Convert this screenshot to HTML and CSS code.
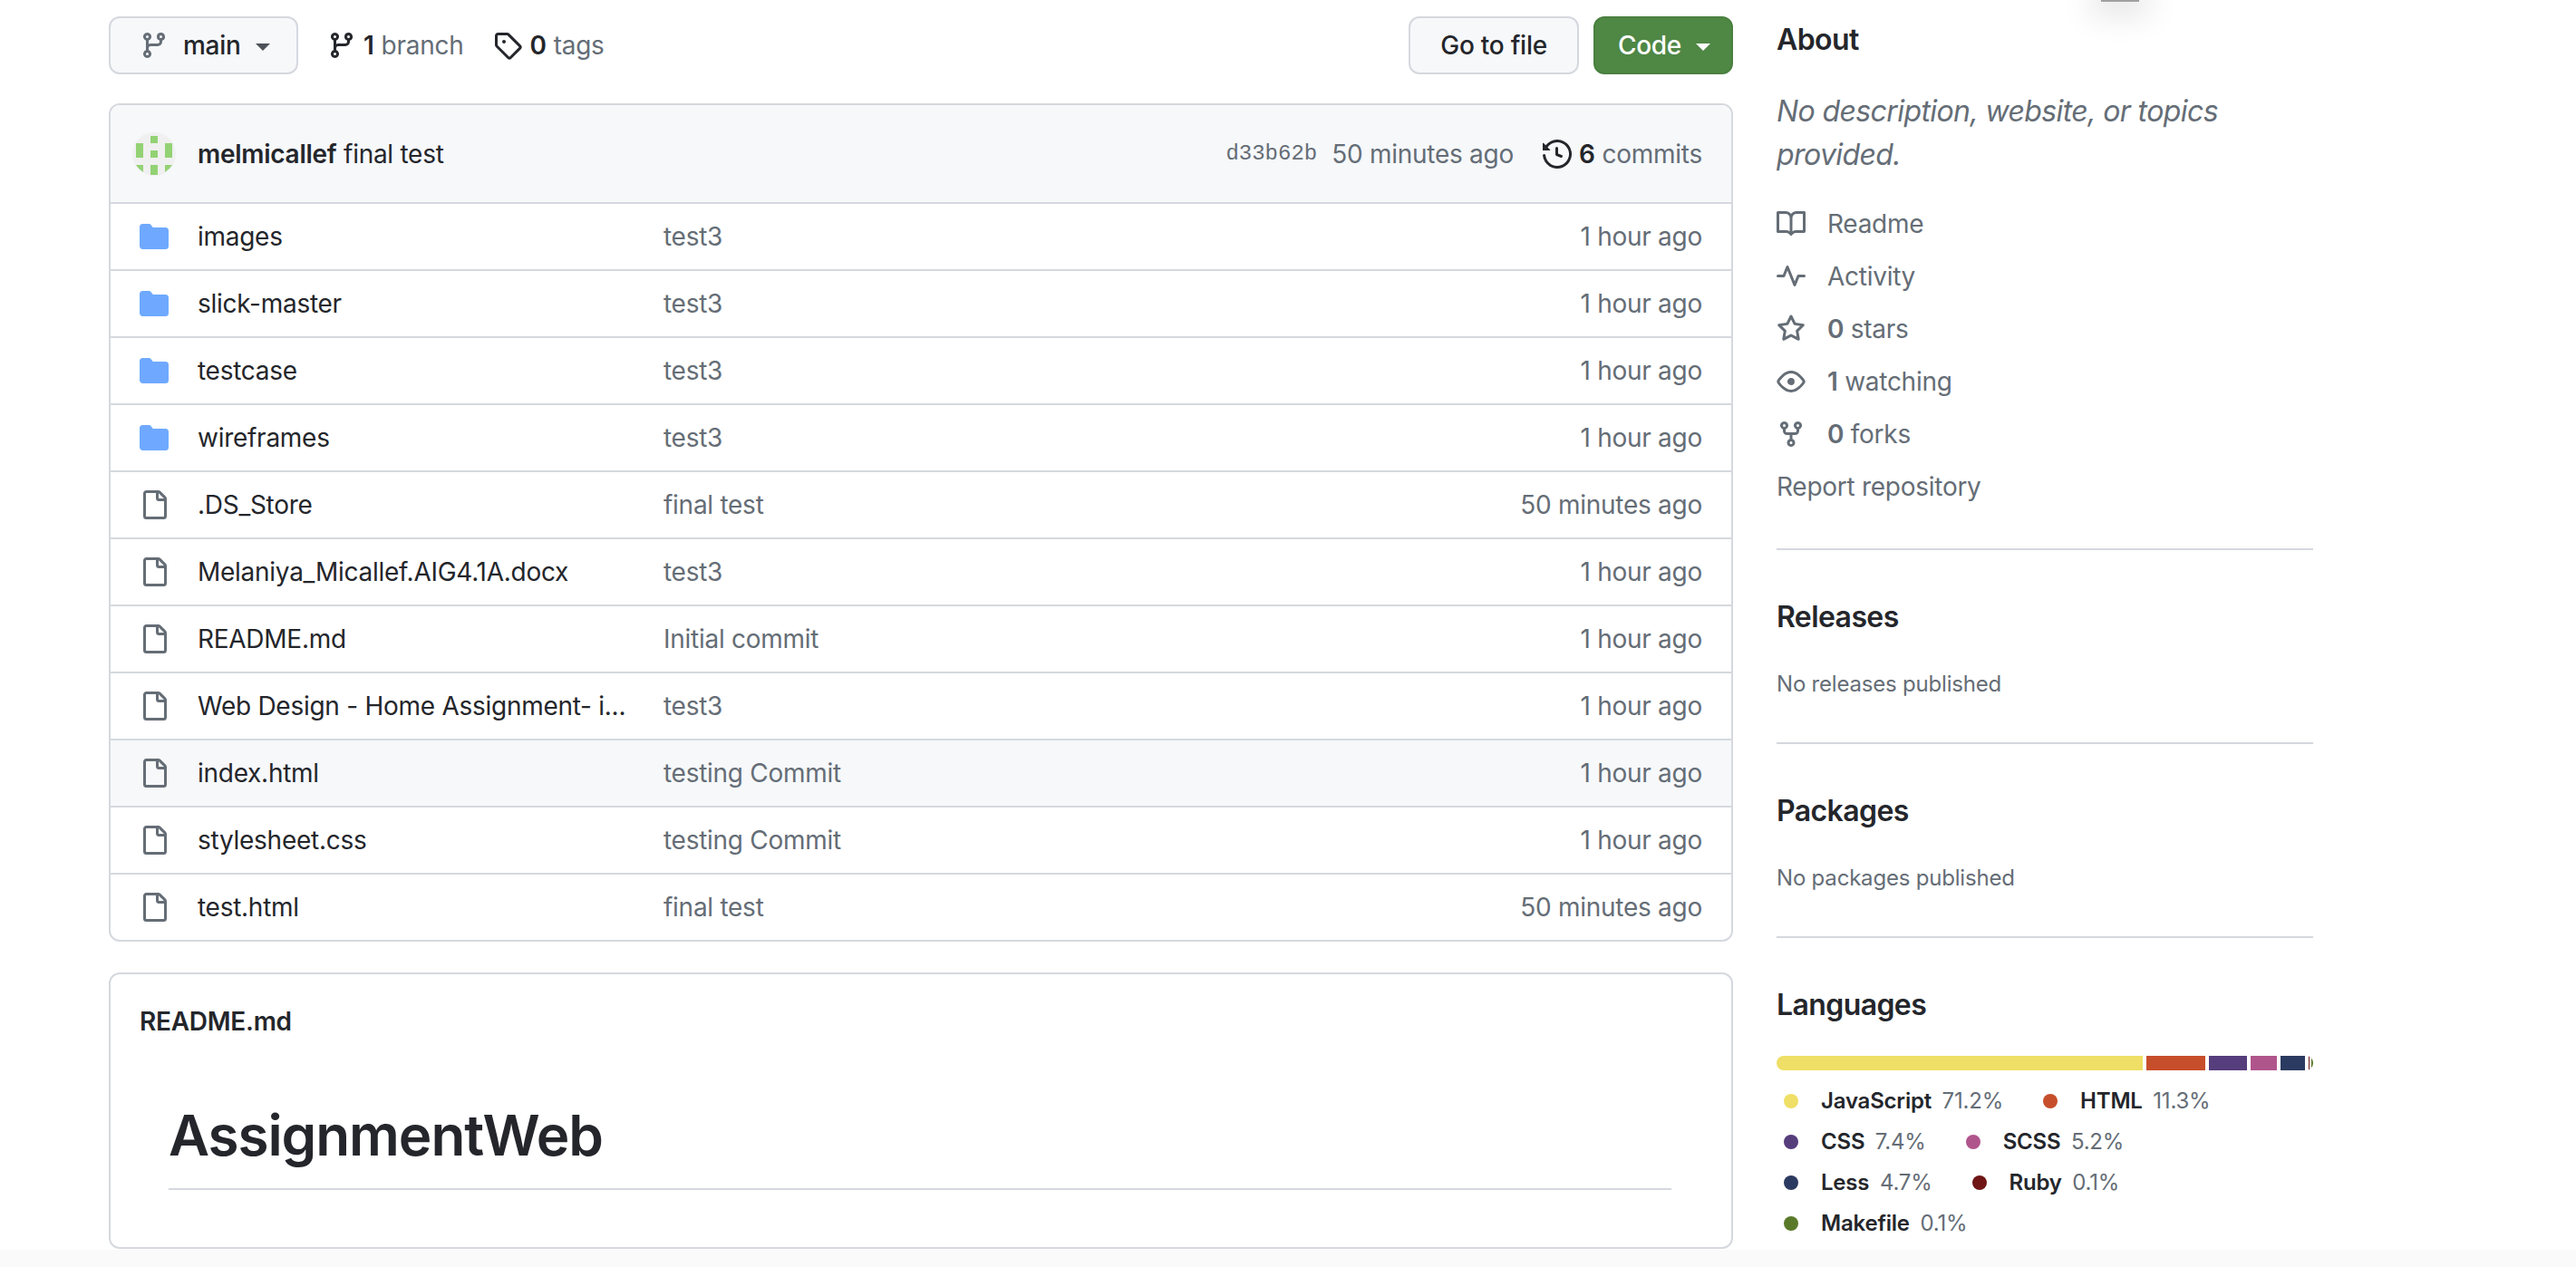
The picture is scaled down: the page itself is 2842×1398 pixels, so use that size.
FILE: index.html
```html
<!DOCTYPE html>
<html lang="en">

<head>
    <meta charset="UTF-8">
    <meta name="viewport" content="width=device-width, initial-scale=1.0">
    <title>AssignmentWeb</title>
    <link rel="stylesheet" href="styles.css">
</head>

<body>
    <svg class="sprites" aria-hidden="true">
        <symbol id="i-branch" viewBox="0 0 16 16"><path d="M9.5 3.25a2.25 2.25 0 1 1 3 2.122V6A2.5 2.5 0 0 1 10 8.5H6a1 1 0 0 0-1 1v1.128a2.251 2.251 0 1 1-1.5 0V5.372a2.25 2.25 0 1 1 1.5 0v1.836A2.493 2.493 0 0 1 6 7h4a1 1 0 0 0 1-1v-.628A2.25 2.25 0 0 1 9.5 3.25Zm-6 0a.75.75 0 1 0 1.5 0 .75.75 0 0 0-1.5 0Zm8.25-.75a.75.75 0 1 0 0 1.5.75.75 0 0 0 0-1.5ZM4.25 12a.75.75 0 1 0 0 1.5.75.75 0 0 0 0-1.5Z"/></symbol>
        <symbol id="i-tag" viewBox="0 0 16 16"><path d="M1 7.775V2.75C1 1.784 1.784 1 2.75 1h5.025c.464 0 .91.184 1.238.513l6.25 6.25a1.75 1.75 0 0 1 0 2.474l-5.026 5.026a1.75 1.75 0 0 1-2.474 0l-6.25-6.25A1.75 1.75 0 0 1 1 7.775Zm1.5 0c0 .066.026.13.073.177l6.25 6.25a.25.25 0 0 0 .354 0l5.025-5.025a.25.25 0 0 0 0-.354l-6.25-6.25a.25.25 0 0 0-.177-.073H2.75a.25.25 0 0 0-.25.25ZM6 5a1 1 0 1 1 0 2 1 1 0 0 1 0-2Z"/></symbol>
        <symbol id="i-history" viewBox="0 0 16 16"><path d="m.427 1.927 1.215 1.215a8.002 8.002 0 1 1-1.6 5.685.75.75 0 1 1 1.493-.154 6.5 6.5 0 1 0 1.18-4.458l1.358 1.358A.25.25 0 0 1 3.896 6H.25A.25.25 0 0 1 0 5.75V2.104a.25.25 0 0 1 .427-.177ZM7.75 4a.75.75 0 0 1 .75.75v2.992l2.028.812a.75.75 0 0 1-.557 1.392l-2.5-1A.751.751 0 0 1 7 8.25v-3.5A.75.75 0 0 1 7.75 4Z"/></symbol>
        <symbol id="i-folder" viewBox="0 0 16 16"><path d="M1.75 1A1.75 1.75 0 0 0 0 2.75v10.5C0 14.216.784 15 1.75 15h12.5A1.75 1.75 0 0 0 16 13.25v-8.5A1.75 1.75 0 0 0 14.25 3H7.5a.25.25 0 0 1-.2-.1l-.9-1.2C6.07 1.26 5.55 1 5 1H1.75Z"/></symbol>
        <symbol id="i-file" viewBox="0 0 16 16"><path d="M2 1.75C2 .784 2.784 0 3.75 0h6.586c.464 0 .909.184 1.237.513l2.914 2.914c.329.328.513.773.513 1.237v9.586A1.75 1.75 0 0 1 13.25 16h-9.5A1.75 1.75 0 0 1 2 14.25Zm1.75-.25a.25.25 0 0 0-.25.25v12.5c0 .138.112.25.25.25h9.5a.25.25 0 0 0 .25-.25V6h-2.75A1.75 1.75 0 0 1 9 4.25V1.5Zm6.75.062V4.25c0 .138.112.25.25.25h2.688l-.011-.013-2.914-2.914-.013-.011Z"/></symbol>
        <symbol id="i-book" viewBox="0 0 16 16"><path d="M0 1.75A.75.75 0 0 1 .75 1h4.253c1.227 0 2.317.59 3 1.501A3.743 3.743 0 0 1 11.006 1h4.245a.75.75 0 0 1 .75.75v10.5a.75.75 0 0 1-.75.75h-4.507a2.25 2.25 0 0 0-1.591.659l-.622.621a.75.75 0 0 1-1.06 0l-.622-.621A2.25 2.25 0 0 0 5.258 13H.75a.75.75 0 0 1-.75-.75Zm7.251 10.324.004-5.073-.002-2.253A2.25 2.25 0 0 0 5.003 2.5H1.5v9h3.757a3.75 3.75 0 0 1 1.994.574ZM8.755 4.75l-.004 7.322a3.752 3.752 0 0 1 1.992-.572H14.5v-9h-3.495a2.25 2.25 0 0 0-2.25 2.25Z"/></symbol>
        <symbol id="i-pulse" viewBox="0 0 16 16"><path d="M6 2c.306 0 .582.187.696.471L10 10.731l1.304-3.26A.751.751 0 0 1 12 7h3.25a.75.75 0 0 1 0 1.5h-2.742l-1.812 4.528a.751.751 0 0 1-1.392 0L6 4.77 4.696 8.03A.75.75 0 0 1 4 8.5H.75a.75.75 0 0 1 0-1.5h2.742l1.812-4.529A.751.751 0 0 1 6 2Z"/></symbol>
        <symbol id="i-star" viewBox="0 0 16 16"><path d="M8 .25a.75.75 0 0 1 .673.418l1.882 3.815 4.21.612a.75.75 0 0 1 .416 1.279l-3.046 2.97.719 4.192a.751.751 0 0 1-1.088.791L8 12.347l-3.766 1.98a.75.75 0 0 1-1.088-.79l.72-4.194L.818 6.374a.75.75 0 0 1 .416-1.28l4.21-.611L7.327.668A.75.75 0 0 1 8 .25Zm0 2.445L6.615 5.5a.75.75 0 0 1-.564.41l-3.097.45 2.24 2.184a.75.75 0 0 1 .216.664l-.528 3.084 2.769-1.456a.75.75 0 0 1 .698 0l2.77 1.456-.53-3.084a.75.75 0 0 1 .216-.664l2.24-2.183-3.096-.45a.75.75 0 0 1-.564-.41L8 2.694Z"/></symbol>
        <symbol id="i-eye" viewBox="0 0 16 16"><path d="M8 2c1.981 0 3.671.992 4.933 2.078 1.27 1.091 2.187 2.345 2.637 3.023a1.62 1.62 0 0 1 0 1.798c-.45.678-1.367 1.932-2.637 3.023C11.67 13.008 9.981 14 8 14c-1.981 0-3.671-.992-4.933-2.078C1.797 10.83.88 9.576.43 8.898a1.62 1.62 0 0 1 0-1.798c.45-.677 1.367-1.931 2.637-3.022C4.33 2.992 6.019 2 8 2ZM1.679 7.932a.12.12 0 0 0 0 .136c.411.622 1.241 1.75 2.366 2.717C5.176 11.758 6.527 12.5 8 12.5c1.473 0 2.825-.742 3.955-1.715 1.124-.967 1.954-2.096 2.366-2.717a.12.12 0 0 0 0-.136c-.412-.621-1.242-1.75-2.366-2.717C10.824 4.242 9.473 3.5 8 3.5c-1.473 0-2.825.742-3.955 1.715-1.124.967-1.954 2.096-2.366 2.717ZM8 10a2 2 0 1 1-.001-3.999A2 2 0 0 1 8 10Z"/></symbol>
        <symbol id="i-fork" viewBox="0 0 16 16"><path d="M5 5.372v.878c0 .414.336.75.75.75h4.5a.75.75 0 0 0 .75-.75v-.878a2.25 2.25 0 1 1 1.5 0v.878a2.25 2.25 0 0 1-2.25 2.25h-1.5v2.128a2.251 2.251 0 1 1-1.5 0V8.5h-1.5A2.25 2.25 0 0 1 3.5 6.25v-.878a2.25 2.25 0 1 1 1.5 0ZM5 3.25a.75.75 0 1 0-1.5 0 .75.75 0 0 0 1.5 0Zm6.75.75a.75.75 0 1 0 0-1.5.75.75 0 0 0 0 1.5Zm-3 8.75a.75.75 0 1 0-1.5 0 .75.75 0 0 0 1.5 0Z"/></symbol>
    </svg>

    <div class="page">
        <main class="main">
            <div class="toolbar">
                <button class="btn btn-branch">
                    <svg class="icon muted-icon"><use href="#i-branch"/></svg>
                    <span>main</span>
                    <span class="caret"></span>
                </button>
                <a class="count"><svg class="icon dark-icon"><use href="#i-branch"/></svg><b>1</b> branch</a>
                <a class="count"><svg class="icon dark-icon"><use href="#i-tag"/></svg><b>0</b> tags</a>
                <div class="toolbar-right">
                    <button class="btn">Go to file</button>
                    <button class="btn btn-code">Code <span class="caret"></span></button>
                </div>
            </div>

            <div class="files">
                <div class="commit">
                    <svg class="avatar" viewBox="0 0 48 48">
                        <circle cx="24" cy="24" r="24" fill="#f0f0f0"/>
                        <g fill="#93d274">
                            <rect x="20" y="4" width="8" height="8"/>
                            <rect x="4" y="12" width="8" height="16"/>
                            <rect x="20" y="20" width="8" height="8"/>
                            <rect x="36" y="12" width="8" height="16"/>
                            <path d="M4 36h8v8a24 24 0 0 1-8-8Z"/>
                            <rect x="20" y="36" width="8" height="11"/>
                            <path d="M36 36h8a24 24 0 0 1-8 8Z"/>
                        </g>
                    </svg>
                    <span class="commit-msg"><b>melmicallef</b> final test</span>
                    <span class="commit-meta">
                        <code>d33b62b</code>
                        <span>50 minutes ago</span>
                        <a class="commits"><svg class="icon dark-icon"><use href="#i-history"/></svg><b>6</b> commits</a>
                    </span>
                </div>
                <div class="row"><svg class="icon folder"><use href="#i-folder"/></svg><a class="name">images</a><span class="msg">test3</span><span class="age">1 hour ago</span></div>
                <div class="row"><svg class="icon folder"><use href="#i-folder"/></svg><a class="name">slick-master</a><span class="msg">test3</span><span class="age">1 hour ago</span></div>
                <div class="row"><svg class="icon folder"><use href="#i-folder"/></svg><a class="name">testcase</a><span class="msg">test3</span><span class="age">1 hour ago</span></div>
                <div class="row"><svg class="icon folder"><use href="#i-folder"/></svg><a class="name">wireframes</a><span class="msg">test3</span><span class="age">1 hour ago</span></div>
                <div class="row"><svg class="icon muted-icon"><use href="#i-file"/></svg><a class="name">.DS_Store</a><span class="msg">final test</span><span class="age">50 minutes ago</span></div>
                <div class="row"><svg class="icon muted-icon"><use href="#i-file"/></svg><a class="name">Melaniya_Micallef.AIG4.1A.docx</a><span class="msg">test3</span><span class="age">1 hour ago</span></div>
                <div class="row"><svg class="icon muted-icon"><use href="#i-file"/></svg><a class="name">README.md</a><span class="msg">Initial commit</span><span class="age">1 hour ago</span></div>
                <div class="row"><svg class="icon muted-icon"><use href="#i-file"/></svg><a class="name">Web Design - Home Assignment- i...</a><span class="msg">test3</span><span class="age">1 hour ago</span></div>
                <div class="row hover"><svg class="icon muted-icon"><use href="#i-file"/></svg><a class="name">index.html</a><span class="msg">testing Commit</span><span class="age">1 hour ago</span></div>
                <div class="row"><svg class="icon muted-icon"><use href="#i-file"/></svg><a class="name">stylesheet.css</a><span class="msg">testing Commit</span><span class="age">1 hour ago</span></div>
                <div class="row"><svg class="icon muted-icon"><use href="#i-file"/></svg><a class="name">test.html</a><span class="msg">final test</span><span class="age">50 minutes ago</span></div>
            </div>

            <div class="readme">
                <div class="readme-label">README.md</div>
                <h1>AssignmentWeb</h1>
            </div>
        </main>

        <aside class="side">
            <section class="about">
                <h2>About</h2>
                <p class="desc">No description, website, or topics provided.</p>
                <ul class="links">
                    <li><svg class="icon muted-icon"><use href="#i-book"/></svg>Readme</li>
                    <li><svg class="icon muted-icon"><use href="#i-pulse"/></svg>Activity</li>
                    <li><svg class="icon muted-icon"><use href="#i-star"/></svg><span><b>0</b> stars</span></li>
                    <li><svg class="icon muted-icon"><use href="#i-eye"/></svg><span><b>1</b> watching</span></li>
                    <li><svg class="icon muted-icon"><use href="#i-fork"/></svg><span><b>0</b> forks</span></li>
                    <li>Report repository</li>
                </ul>
            </section>
            <section class="block">
                <h2>Releases</h2>
                <p class="none">No releases published</p>
            </section>
            <section class="block">
                <h2>Packages</h2>
                <p class="none">No packages published</p>
            </section>
            <section class="block langs">
                <h2>Languages</h2>
                <div class="bar">
                    <span class="seg js"></span>
                    <span class="seg html"></span>
                    <span class="seg css"></span>
                    <span class="seg scss"></span>
                    <span class="seg less"></span>
                    <span class="seg ruby"></span>
                    <span class="seg make"></span>
                </div>
                <ul class="legend">
                    <li><i class="dot js"></i><b>JavaScript</b> 71.2%</li>
                    <li><i class="dot html"></i><b>HTML</b> 11.3%</li>
                    <li><i class="dot css"></i><b>CSS</b> 7.4%</li>
                    <li><i class="dot scss"></i><b>SCSS</b> 5.2%</li>
                    <li><i class="dot less"></i><b>Less</b> 4.7%</li>
                    <li><i class="dot ruby"></i><b>Ruby</b> 0.1%</li>
                    <li><i class="dot make"></i><b>Makefile</b> 0.1%</li>
                </ul>
            </section>
        </aside>
    </div>

    <div class="cursor-shadow"></div>
    <div class="bottom-fade"></div>
</body>

</html>
```

FILE: styles.css
```css
* {
    box-sizing: border-box;
}

html, body {
    height: 100%;
}

body {
    margin: 0;
    overflow: hidden;
    background: #fff;
    color: #24262b;
    font-family: Inter, "Liberation Sans", sans-serif;
    font-size: 28px;
    letter-spacing: -0.27px;
}

ul {
    list-style: none;
    margin: 0;
    padding: 0;
}

b {
    font-weight: 600;
}

.sprites {
    display: none;
}

.icon {
    width: 32px;
    height: 32px;
    flex: none;
    fill: currentColor;
}

.muted-icon {
    color: #656d76;
}

.dark-icon {
    color: #24262b;
}

.folder {
    color: #6ea9ff;
}

.page {
    display: flex;
    gap: 48px;
    padding-left: 120px;
}

.main {
    width: 1792px;
    flex: none;
    padding-top: 18px;
}

/* toolbar */
.toolbar {
    display: flex;
    align-items: center;
    height: 64px;
}

.btn {
    display: inline-flex;
    align-items: center;
    height: 64px;
    padding: 0 33px;
    font: inherit;
    letter-spacing: inherit;
    font-weight: 500;
    color: #24262b;
    background: #f6f8fa;
    border: 2px solid #d5d8de;
    border-radius: 12px;
}

.btn-branch {
    width: 209px;
    padding: 0 0 0 32px;
    margin-right: 32px;
}

.btn-branch span:first-of-type {
    margin-left: 16px;
}

.caret {
    width: 0;
    height: 0;
    margin-left: 16px;
    margin-top: 3px;
    border-left: 8px solid transparent;
    border-right: 8px solid transparent;
    border-top: 8px solid currentColor;
}

.btn-branch .caret {
    color: #4c5258;
}

.count {
    display: flex;
    align-items: center;
    gap: 8px;
    margin-right: 33px;
    color: #656d76;
}

.count b {
    color: #24262b;
}

.toolbar-right {
    margin-left: auto;
    display: flex;
    gap: 16px;
}

.btn-code {
    color: #fff;
    background: #4f8745;
    border-color: #4a8040;
    padding: 0 23px 0 25px;
}

.btn-code .caret {
    margin-left: 16px;
}

/* file list */
.files {
    margin-top: 32px;
    border: 2px solid #d5d8de;
    border-radius: 12px;
    overflow: hidden;
}

.commit {
    display: flex;
    align-items: center;
    height: 107px;
    padding: 0 32px 0 24px;
    background: #f6f8fa;
}

.avatar {
    width: 48px;
    height: 48px;
    flex: none;
    margin-right: 24px;
}

.commit-meta {
    margin-left: auto;
    display: flex;
    align-items: center;
    color: #656d76;
}

.commit-meta code {
    font-family: "Liberation Mono", monospace;
    font-size: 24px;
    letter-spacing: 0;
    margin-right: 16px;
}

.commits {
    display: flex;
    align-items: center;
    gap: 8px;
    margin-left: 32px;
}

.commits b {
    color: #24262b;
}

.row {
    display: flex;
    align-items: center;
    height: 74px;
    padding: 0 32px;
    border-top: 2px solid #d5d8de;
}

.row.hover {
    background: #f6f8fa;
}

.row .icon {
    margin-right: 32px;
}

.name {
    width: 470px;
    flex: none;
    margin-right: 44px;
    white-space: nowrap;
}

.msg {
    color: #656d76;
}

.age {
    margin-left: auto;
    color: #656d76;
}

/* readme */
.readme {
    height: 305px;
    margin-top: 34px;
    padding: 32px 66px 0 32px;
    border: 2px solid #d5d8de;
    border-radius: 12px;
}

.readme-label {
    font-weight: 600;
    line-height: 40px;
}

.readme h1 {
    margin: 66px 0 0 32px;
    padding-bottom: 18px;
    font-size: 62px;
    font-weight: 600;
    line-height: 80px;
    letter-spacing: -1.1px;
    border-bottom: 2px solid #d5d8de;
}

/* sidebar */
.side {
    width: 592px;
    flex: none;
}

.side h2 {
    margin: 0;
    font-size: 32px;
    font-weight: 600;
    line-height: 40px;
    letter-spacing: -0.6px;
}

.about {
    padding: 24px 0 39px;
    border-bottom: 2px solid #d5d8de;
}

.desc {
    margin: 35px 0 0;
    font-size: 32px;
    line-height: 48px;
    font-style: italic;
    letter-spacing: -0.6px;
    color: #656d76;
}

.links {
    margin-top: 23px;
    color: #656d76;
}

.links li {
    display: flex;
    align-items: center;
    height: 58px;
}

.links .icon {
    margin-right: 24px;
}

.block {
    padding: 54px 0 46px;
    border-bottom: 2px solid #d5d8de;
}

.none {
    margin: 36px 0 0;
    font-size: 24px;
    line-height: 36px;
    letter-spacing: -0.2px;
    color: #656d76;
}

.langs {
    border-bottom: 0;
}

.bar {
    display: flex;
    gap: 4px;
    height: 16px;
    margin-top: 36px;
    border-radius: 12px;
    overflow: hidden;
}

.seg {
    flex: none;
}

.seg.js { width: 404px; }
.seg.html { width: 65px; }
.seg.css { width: 42px; }
.seg.scss { width: 29px; }
.seg.less { width: 27px; }
.seg.ruby { width: 1px; }
.seg.make { width: 2px; margin-left: -2px; }

.js { background: #efdf66; }
.html { background: #c74e2b; }
.css { background: #563d7c; }
.scss { background: #b0558c; }
.less { background: #2b3a60; }
.ruby { background: #701516; }
.make { background: #5a7a2a; }

.legend {
    display: flex;
    flex-wrap: wrap;
    margin-top: 11px;
    font-size: 24px;
    letter-spacing: -0.2px;
    color: #656d76;
}

.legend li {
    display: flex;
    align-items: center;
    height: 45px;
    padding-left: 8px;
    margin-right: 36px;
    white-space: pre;
}

.legend b {
    color: #24262b;
    margin-right: 5px;
}

.dot {
    width: 16px;
    height: 16px;
    margin-right: 25px;
    border-radius: 50%;
}

/* window chrome bits that sit over the page */
.cursor-shadow {
    position: absolute;
    left: 2318px;
    top: 0;
    width: 42px;
    height: 2px;
    background: #a0a0a0;
    box-shadow: 0 0 36px 10px rgba(0, 0, 0, 0.16);
}

.bottom-fade {
    position: absolute;
    left: 0;
    right: 0;
    bottom: 0;
    height: 19px;
    background: #fafafa;
    pointer-events: none;
}
```
